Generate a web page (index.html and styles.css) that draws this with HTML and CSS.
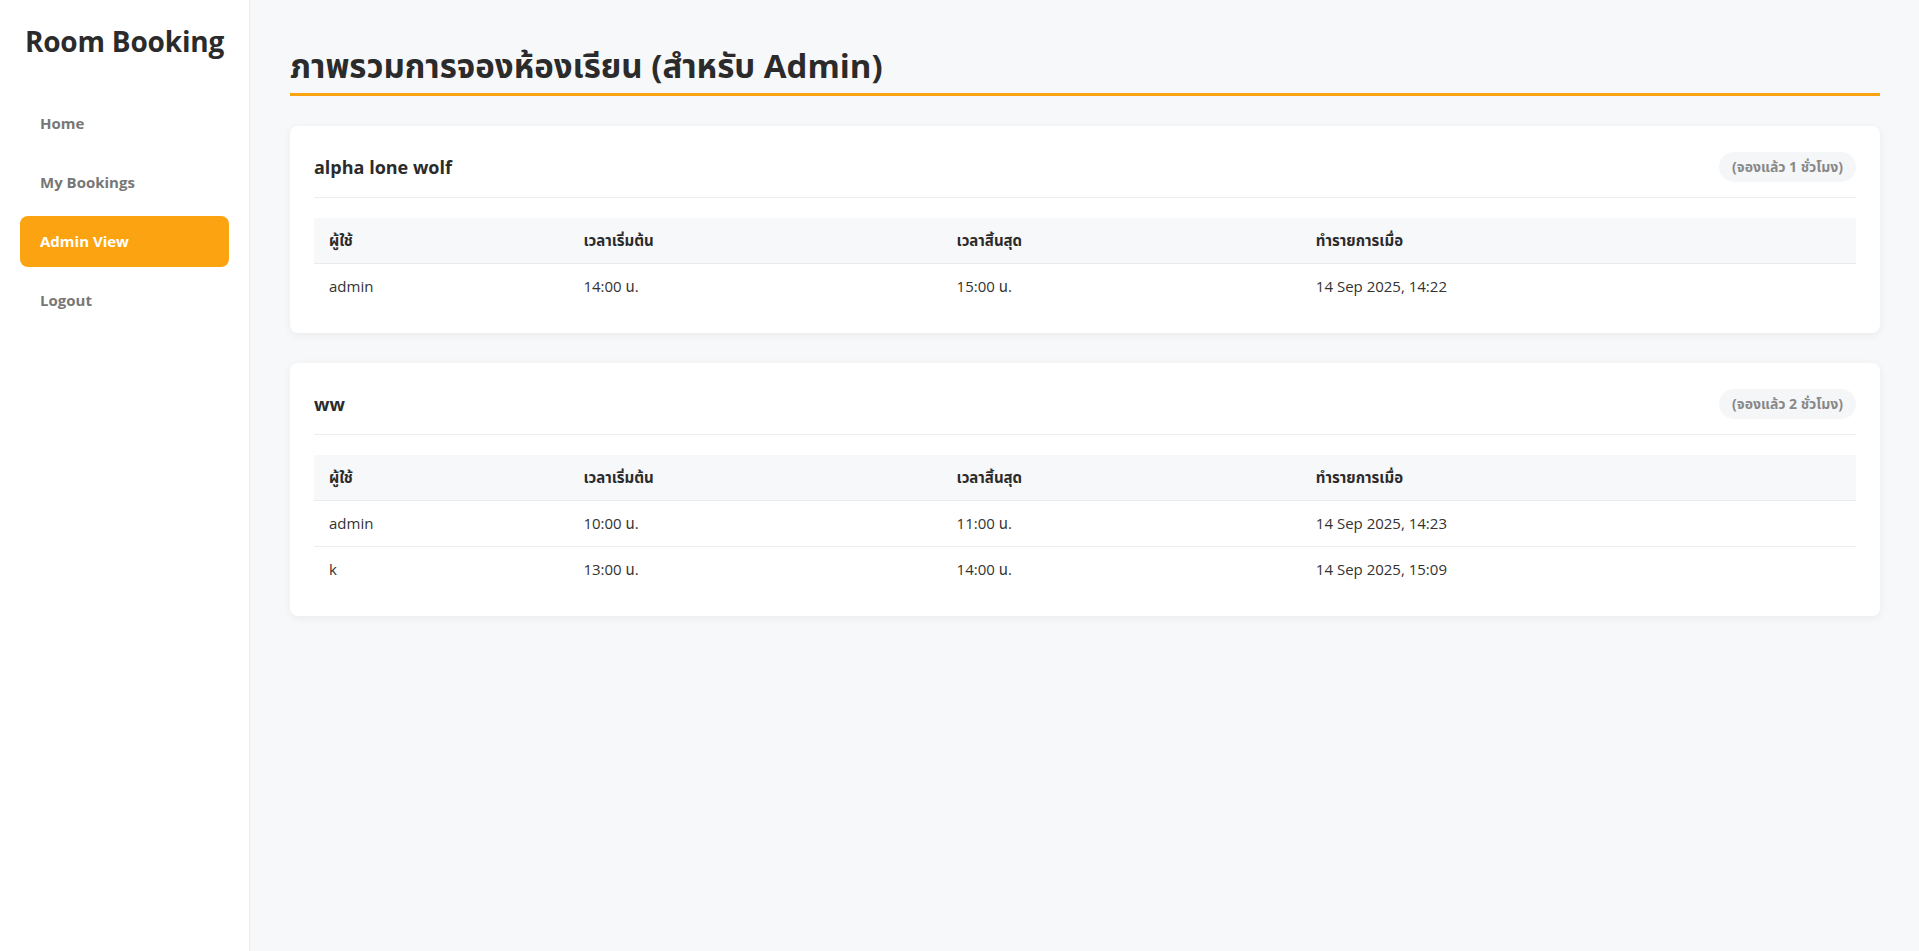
FILE: index.html
```html
<!DOCTYPE html>
<html lang="th">
<head>
<meta charset="utf-8">
<title>Room Booking - Admin</title>
<link rel="stylesheet" href="styles.css">
</head>
<body>
<div class="layout">
  <aside class="sidebar">
    <div class="brand">Room Booking</div>
    <nav class="nav">
      <a class="nav-item" href="#">Home</a>
      <a class="nav-item" href="#">My Bookings</a>
      <a class="nav-item active" href="#">Admin View</a>
      <a class="nav-item" href="#">Logout</a>
    </nav>
  </aside>
  <main class="main">
    <h1 class="page-title">ภาพรวมการจองห้องเรียน (สำหรับ Admin)</h1>

    <section class="card">
      <div class="card-header">
        <h2 class="room-name">alpha lone wolf</h2>
        <span class="badge">(จองแล้ว 1 ชั่วโมง)</span>
      </div>
      <table class="bookings">
        <thead>
          <tr>
            <th class="c-user">ผู้ใช้</th>
            <th class="c-start">เวลาเริ่มต้น</th>
            <th class="c-end">เวลาสิ้นสุด</th>
            <th class="c-made">ทำรายการเมื่อ</th>
          </tr>
        </thead>
        <tbody>
          <tr><td>admin</td><td>14:00 น.</td><td>15:00 น.</td><td>14 Sep 2025, 14:22</td></tr>
        </tbody>
      </table>
    </section>

    <section class="card">
      <div class="card-header">
        <h2 class="room-name">ww</h2>
        <span class="badge">(จองแล้ว 2 ชั่วโมง)</span>
      </div>
      <table class="bookings">
        <thead>
          <tr>
            <th class="c-user">ผู้ใช้</th>
            <th class="c-start">เวลาเริ่มต้น</th>
            <th class="c-end">เวลาสิ้นสุด</th>
            <th class="c-made">ทำรายการเมื่อ</th>
          </tr>
        </thead>
        <tbody>
          <tr><td>admin</td><td>10:00 น.</td><td>11:00 น.</td><td>14 Sep 2025, 14:23</td></tr>
          <tr><td>k</td><td>13:00 น.</td><td>14:00 น.</td><td>14 Sep 2025, 15:09</td></tr>
        </tbody>
      </table>
    </section>
  </main>
</div>
</body>
</html>
```

FILE: styles.css
```css
* { box-sizing: border-box; }

html, body {
  margin: 0;
  padding: 0;
  height: 100%;
}

body {
  font-family: "Open Sans", "Noto Sans", "Noto Sans Thai", "DejaVu Sans", sans-serif;
  color: #333;
  background: #f7f8fa;
}

.layout {
  display: flex;
  min-height: 100vh;
}

.sidebar {
  width: 250px;
  flex: 0 0 250px;
  background: #fff;
  border-right: 1px solid #e9ebee;
  padding: 20px 20px;
}

.brand {
  font-size: 28px;
  font-weight: 700;
  color: #2b2b2b;
  text-align: center;
  line-height: 42px;
  margin-bottom: 36px;
  letter-spacing: -0.2px;
}

.nav {
  display: flex;
  flex-direction: column;
  gap: 8px;
}

.nav-item {
  display: block;
  padding: 15px 20px;
  line-height: 21px;
  font-size: 15px;
  font-weight: 700;
  color: #777;
  text-decoration: none;
  border-radius: 8px;
}

.nav-item.active {
  background: #fca311;
  color: #fff;
}

.main {
  flex: 1;
  padding: 40px 39px 40px 40px;
}

.page-title {
  margin: 0 0 30px;
  font-size: 33px;
  font-weight: 700;
  color: #2b2b2b;
  line-height: 44px;
  padding-top: 4px;
  padding-bottom: 5px;
  border-bottom: 3px solid #fca311;
}

.card {
  background: #fff;
  border-radius: 8px;
  box-shadow: 0 2px 10px rgba(0, 0, 0, 0.06);
  padding: 26px 24px 24px;
  margin-bottom: 30px;
}

.card-header {
  display: flex;
  justify-content: space-between;
  align-items: center;
  padding-bottom: 15px;
  border-bottom: 1px solid #eceef0;
  margin-bottom: 20px;
  min-height: 46px;
}

.room-name {
  margin: 0;
  font-size: 18px;
  font-weight: 700;
  color: #2b2b2b;
}

.badge {
  background: #f5f6f8;
  color: #888;
  font-size: 14px;
  font-weight: 700;
  line-height: 20px;
  padding: 5px 13px;
  border-radius: 15px;
}

.bookings {
  width: 100%;
  border-collapse: collapse;
  table-layout: fixed;
  font-size: 15px;
}

.bookings th,
.bookings td {
  text-align: left;
  padding: 12px 15px;
  line-height: 21px;
}

.bookings th {
  background: #f7f8fa;
  font-weight: 700;
  color: #2b2b2b;
  border-bottom: 1px solid #e9ecef;
}

.bookings td {
  color: #333;
  border-bottom: 1px solid #eceef0;
}

.bookings tbody tr:last-child td {
  border-bottom: none;
}

.c-user { width: 16.5%; }
.c-start { width: 24.2%; }
.c-end { width: 23.3%; }
.c-made { width: 36%; }
```
